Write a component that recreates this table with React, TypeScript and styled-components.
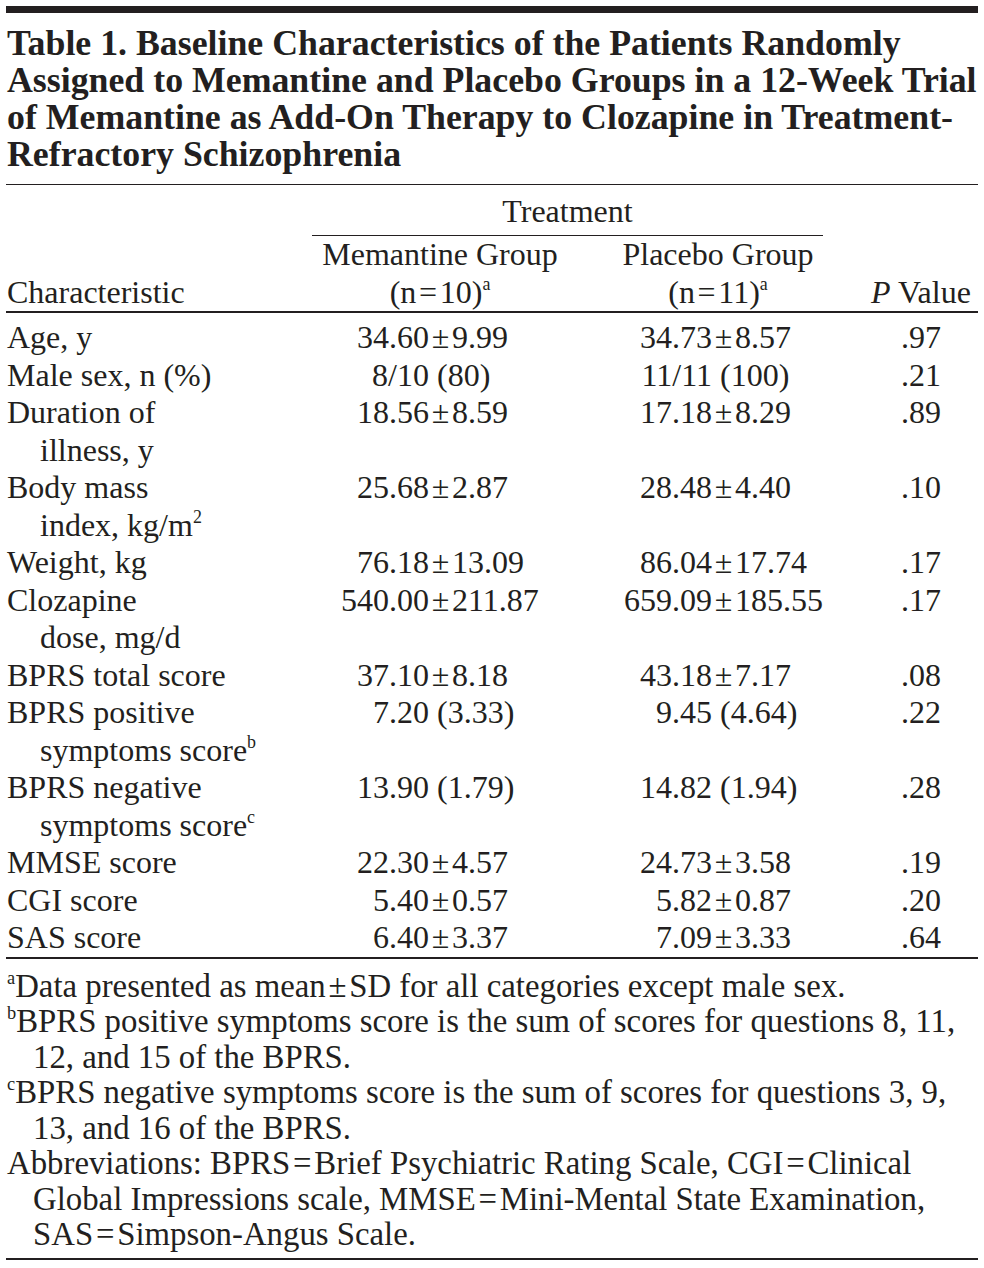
import * as React from 'react'
import styled, { createGlobalStyle } from 'styled-components'

const ink = '#231f20'

const GlobalStyle = createGlobalStyle`
  body {
    margin: 0;
    background: #fff;
    color: ${ink};
    font-family: 'Liberation Serif', 'Times New Roman', serif;
  }
`

const Page = styled.div`
  width: 972px;
  margin-left: 6px;
  padding-top: 6px;
`

const TopBar = styled.div`
  height: 7px;
  background: ${ink};
`

const Caption = styled.h1`
  margin: 0;
  padding: 12px 0 11px 1px;
  font-size: 35.8px;
  line-height: 37px;
  font-weight: bold;
  white-space: nowrap;
  border-bottom: 1.5px solid ${ink};
`

const Grid = styled.div`
  display: grid;
  grid-template-columns: 306px 256px 300px 1fr;
  font-size: 32px;
  line-height: 37.5px;
  white-space: nowrap;
`

const Head = styled(Grid)`
  padding-top: 7.5px;
  border-bottom: 2px solid ${ink};
`

const Spanner = styled.div`
  grid-column: 2 / 4;
  margin-right: 45px;
  padding-bottom: 5px;
  text-align: center;
  border-bottom: 1.5px solid ${ink};
`

const ColHead = styled.div<{ $col: number }>`
  grid-column: ${p => p.$col};
  grid-row: 2;
  text-align: center;
`

const StubHead = styled.div`
  grid-column: 1;
  grid-row: 2;
  align-self: end;
  padding-left: 1px;
`

const PHead = styled.div`
  grid-column: 4;
  grid-row: 2;
  align-self: end;
  text-align: center;
  padding-right: 4px;
`

const Body = styled(Grid)`
  padding-top: 6px;
  border-bottom: 2px solid ${ink};
`

const Label = styled.div`
  padding-left: 1px;
`

const Continued = styled.span`
  display: block;
  padding-left: 33px;
`

const Value = styled.div`
  display: flex;
`

const Lead = styled.span<{ $w: number }>`
  flex: none;
  width: ${p => p.$w}px;
  text-align: right;
`

const PCell = styled.div`
  text-align: center;
  padding-right: 4px;
`

const Sup = styled.sup`
  font-size: 0.56em;
  line-height: 0;
  vertical-align: 0.72em;
`

const Notes = styled.div`
  padding: 10px 0 5px;
  font-size: 32.8px;
  line-height: 35.5px;
  white-space: nowrap;
  border-bottom: 2px solid ${ink};
`

const Note = styled.p`
  margin: 0;
  padding-left: 27px;
  text-indent: -26px;
`

const hair = '\u200A'

type Cell = { lead: string; tail: string }

const pm = (a: string, b: string): Cell => ({ lead: a, tail: `${hair}±${hair}${b}` })
const par = (a: string, b: string): Cell => ({ lead: a, tail: `\u00A0(${b})` })

interface Row {
  label: string[]
  sup?: string
  mem: Cell
  pla: Cell
  p: string
}

const rows: Row[] = [
  { label: ['Age, y'], mem: pm('34.60', '9.99'), pla: pm('34.73', '8.57'), p: '.97' },
  { label: ['Male sex, n (%)'], mem: par('8/10', '80'), pla: par('11/11', '100'), p: '.21' },
  { label: ['Duration of', 'illness, y'], mem: pm('18.56', '8.59'), pla: pm('17.18', '8.29'), p: '.89' },
  { label: ['Body mass', 'index, kg/m'], sup: '2', mem: pm('25.68', '2.87'), pla: pm('28.48', '4.40'), p: '.10' },
  { label: ['Weight, kg'], mem: pm('76.18', '13.09'), pla: pm('86.04', '17.74'), p: '.17' },
  { label: ['Clozapine', 'dose, mg/d'], mem: pm('540.00', '211.87'), pla: pm('659.09', '185.55'), p: '.17' },
  { label: ['BPRS total score'], mem: pm('37.10', '8.18'), pla: pm('43.18', '7.17'), p: '.08' },
  { label: ['BPRS positive', 'symptoms score'], sup: 'b', mem: par('7.20', '3.33'), pla: par('9.45', '4.64'), p: '.22' },
  { label: ['BPRS negative', 'symptoms score'], sup: 'c', mem: par('13.90', '1.79'), pla: par('14.82', '1.94'), p: '.28' },
  { label: ['MMSE score'], mem: pm('22.30', '4.57'), pla: pm('24.73', '3.58'), p: '.19' },
  { label: ['CGI score'], mem: pm('5.40', '0.57'), pla: pm('5.82', '0.87'), p: '.20' },
  { label: ['SAS score'], mem: pm('6.40', '3.37'), pla: pm('7.09', '3.33'), p: '.64' },
]

const ValueCell: React.FC<{ cell: Cell; w: number }> = ({ cell, w }) => (
  <Value>
    <Lead $w={w}>{cell.lead}</Lead>
    <span>{cell.tail}</span>
  </Value>
)

const RowLabel: React.FC<{ row: Row }> = ({ row }) => {
  const [first, ...rest] = row.label
  const sup = row.sup ? <Sup>{row.sup}</Sup> : null
  return (
    <Label>
      {first}
      {rest.length === 0 && sup}
      {rest.map((line, i) => (
        <Continued key={i}>
          {line}
          {i === rest.length - 1 && sup}
        </Continued>
      ))}
    </Label>
  )
}

const App: React.FC = () => (
  <Page>
    <GlobalStyle />
    <TopBar />
    <Caption>
      Table 1. Baseline Characteristics of the Patients Randomly
      <br />
      Assigned to Memantine and Placebo Groups in a 12-Week Trial
      <br />
      of Memantine as Add-On Therapy to Clozapine in Treatment-
      <br />
      Refractory Schizophrenia
    </Caption>

    <Head>
      <Spanner>Treatment</Spanner>
      <StubHead>Characteristic</StubHead>
      <ColHead $col={2}>
        Memantine Group
        <br />
        (n{hair}={hair}10)<Sup>a</Sup>
      </ColHead>
      <ColHead $col={3}>
        Placebo Group
        <br />
        (n{hair}={hair}11)<Sup>a</Sup>
      </ColHead>
      <PHead>
        <i>P</i> Value
      </PHead>
    </Head>

    <Body>
      {rows.map((row, i) => (
        <React.Fragment key={i}>
          <RowLabel row={row} />
          <ValueCell cell={row.mem} w={117} />
          <ValueCell cell={row.pla} w={144} />
          <PCell>{row.p}</PCell>
        </React.Fragment>
      ))}
    </Body>

    <Notes>
      <Note>
        <Sup>a</Sup>Data presented as mean{hair}±{hair}SD for all categories except male sex.
      </Note>
      <Note>
        <Sup>b</Sup>BPRS positive symptoms score is the sum of scores for questions 8, 11,
        <br />
        12, and 15 of the BPRS.
      </Note>
      <Note>
        <Sup>c</Sup>BPRS negative symptoms score is the sum of scores for questions 3, 9,
        <br />
        13, and 16 of the BPRS.
      </Note>
      <Note>
        Abbreviations: BPRS{hair}={hair}Brief Psychiatric Rating Scale, CGI{hair}={hair}Clinical
        <br />
        Global Impressions scale, MMSE{hair}={hair}Mini-Mental State Examination,
        <br />
        SAS{hair}={hair}Simpson-Angus Scale.
      </Note>
    </Notes>
  </Page>
)

export default App
